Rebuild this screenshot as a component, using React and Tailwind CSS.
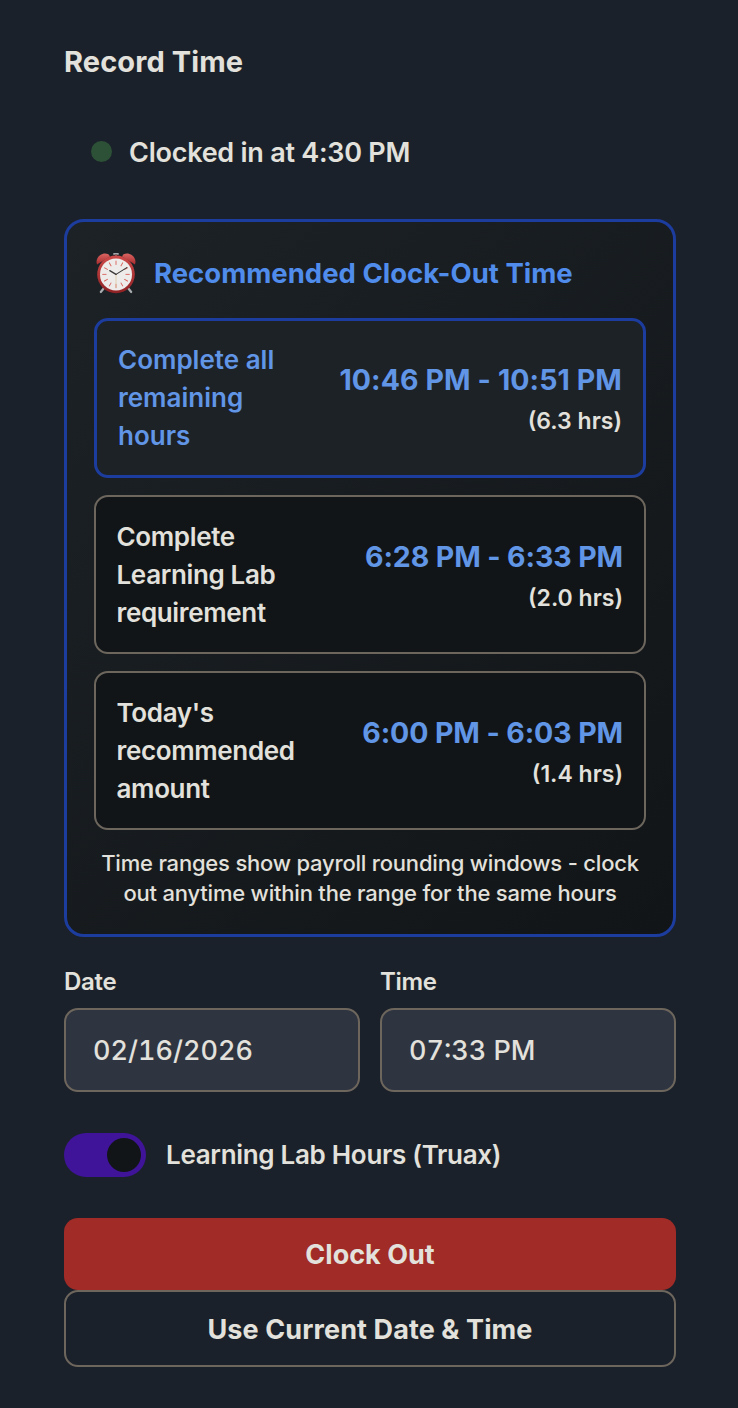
import { useState } from "react";

const clockOutOptions = [
  {
    label: "Complete all remaining hours",
    range: "10:46 PM - 10:51 PM",
    hours: "6.3",
    highlight: true,
  },
  {
    label: "Complete Learning Lab requirement",
    range: "6:28 PM - 6:33 PM",
    hours: "2.0",
  },
  {
    label: "Today's recommended amount",
    range: "6:00 PM - 6:03 PM",
    hours: "1.4",
  },
];

const AlarmClock = () => {
  const ticks = Array.from({ length: 12 }, (_, i) => i * 30);

  return (
    <svg viewBox="0 0 42 42" className="w-[42px] h-[42px] shrink-0">
      <defs>
        <linearGradient id="bell" x1="0" y1="0" x2="0" y2="1">
          <stop offset="0" stopColor="#d86462" />
          <stop offset="1" stopColor="#a92a2c" />
        </linearGradient>
        <linearGradient id="rim" x1="0" y1="0" x2="0" y2="1">
          <stop offset="0" stopColor="#cf4a49" />
          <stop offset="1" stopColor="#8f2124" />
        </linearGradient>
      </defs>
      {/* Feet */}
      <path d="M9 36 L5.8 40" stroke="#a9adb0" strokeWidth="2.2" strokeLinecap="round" />
      <path d="M33 36 L36.2 40" stroke="#a9adb0" strokeWidth="2.2" strokeLinecap="round" />
      {/* Top knob */}
      <path d="M19 1.9 h4" stroke="#a3a7aa" strokeWidth="1.8" strokeLinecap="round" />
      <path d="M21 2.4 v3" stroke="#7c4a4b" strokeWidth="2" />
      {/* Bells */}
      <path d="M2 12.5 C0.5 8 3 3.5 7.5 2 C11 1 14 2 15 4.5 Z" fill="url(#bell)" />
      <path d="M40 12.5 C41.5 8 39 3.5 34.5 2 C31 1 28 2 27 4.5 Z" fill="url(#bell)" />
      <circle cx="21" cy="22.4" r="18.8" fill="url(#rim)" />
      <circle cx="21" cy="22.4" r="16" fill="#eeecea" />
      {ticks.map((deg) => (
        <path
          key={deg}
          d="M21 8.7 v4.2"
          stroke="#d9605c"
          strokeWidth="0.9"
          transform={`rotate(${deg} 21 22.4)`}
        />
      ))}
      <path d="M21 22.4 V36" stroke="#dcc9a4" strokeWidth="0.8" />
      <path d="M21 22.4 L14.8 18.6" stroke="#3a3a3a" strokeWidth="1.3" strokeLinecap="round" />
      <path d="M21 22.4 L31.8 15.6" stroke="#3a3a3a" strokeWidth="1.1" strokeLinecap="round" />
    </svg>
  );
};

const ClockOutOption = ({ label, range, hours, highlight }) => (
  <div
    className={`flex items-center justify-between rounded-[14px] ${
      highlight
        ? "h-[160px] border-3 border-[#1c3c9e] bg-[#1d2226] px-[21px]"
        : "h-[159px] border-2 border-[#6d665d] bg-[#111518] pr-[21px] pl-[20.5px]"
    }`}
  >
    <p
      className={`w-[190px] text-[26px] leading-[38px] font-semibold ${
        highlight ? "text-[#6195e6]" : "tracking-[-0.35px] text-[#e3e1dc]"
      }`}
    >
      {label}
    </p>
    <div className="pt-[4px] text-right whitespace-nowrap">
      <p
        className={`text-[28.5px] leading-[42px] font-[650] text-[#6195e6] ${
          highlight ? "tracking-[0.1px]" : "tracking-[-0.1px]"
        }`}
      >
        {range}
      </p>
      <p className="text-[23px] leading-[40px] font-semibold text-[#e3e1dc]">({hours} hrs)</p>
    </div>
  </div>
);

const Field = ({ label, value }) => (
  <label className="block flex-1">
    <span className="block text-[24px] leading-[36px] font-semibold tracking-[-0.3px]">
      {label}
    </span>
    <input
      type="text"
      defaultValue={value}
      className="mt-[8px] block h-[84px] w-full rounded-[14px] border-2 border-[#6d665d] bg-[#2f3441] px-[27px] text-[27px] font-[450] tabular-nums outline-none"
    />
  </label>
);

const App = () => {
  const [learningLab, setLearningLab] = useState(true);

  return (
    <div className="min-h-[1408px] bg-[#1b212a] pr-[62px] pl-[64px] pt-[41px] font-['Inter',sans-serif] text-[#e3e1dc]">
      <h2 className="text-[29px] leading-[42px] font-[650] tracking-[0.1px]">Record Time</h2>

      {/* Status */}
      <div className="mt-[50px] flex items-center gap-[17px] pl-[27px]">
        <span className="mb-[4px] size-[21px] rounded-full bg-[#2c5136]" />
        <p className="text-[27px] leading-[40px] font-semibold tracking-[-0.25px]">
          Clocked in at 4:30 PM
        </p>
      </div>

      {/* Recommendations */}
      <div className="mt-[46px] h-[718px] rounded-[20px] border-3 border-[#1c3c9e] bg-linear-135 from-[#1d2226] to-[#111518] px-[27px] pt-[29px]">
        <div className="flex h-[44px] items-center gap-[17px] pl-px">
          <AlarmClock />
          <h3 className="pt-[2px] text-[27.5px] font-bold text-[#508ceb]">
            Recommended Clock-Out Time
          </h3>
        </div>
        <div className="mt-[23px] flex flex-col gap-[17px]">
          {clockOutOptions.map((option) => (
            <ClockOutOption key={option.label} {...option} />
          ))}
        </div>
        <p className="mt-[18px] text-center text-[22px] leading-[30px] font-medium tracking-[-0.2px]">
          Time ranges show payroll rounding windows - clock
          <br />
          out anytime within the range for the same hours
        </p>
      </div>

      <div className="mt-[27px] flex gap-[20px]">
        <Field label="Date" value="02/16/2026" />
        <Field label="Time" value="07:33 PM" />
      </div>

      <div className="mt-[41px] flex items-center gap-[20px]">
        <button
          role="switch"
          aria-checked={learningLab}
          aria-label="Learning Lab Hours"
          onClick={() => setLearningLab(!learningLab)}
          className={`flex h-[44px] w-[82px] items-center rounded-full px-[5.5px] ${
            learningLab ? "justify-end bg-[#3f1499]" : "justify-start bg-[#2f3441]"
          }`}
        >
          <span className="size-[34px] rounded-full bg-[#111518]" />
        </button>
        <span className="pb-px text-[26px] font-semibold tracking-[-0.3px]">
          Learning Lab Hours (Truax)
        </span>
      </div>

      <div className="mt-[41px] flex flex-col">
        <button className="h-[72px] rounded-[14px] bg-[#a02b27] pt-[2px] text-[27px] font-[650]">
          Clock Out
        </button>
        <button className="h-[77px] rounded-[14px] border-2 border-[#6d665d] pt-[3px] text-[27px] font-[650] tracking-[0.1px]">
          Use Current Date &amp; Time
        </button>
      </div>
    </div>
  );
};

export default App;
